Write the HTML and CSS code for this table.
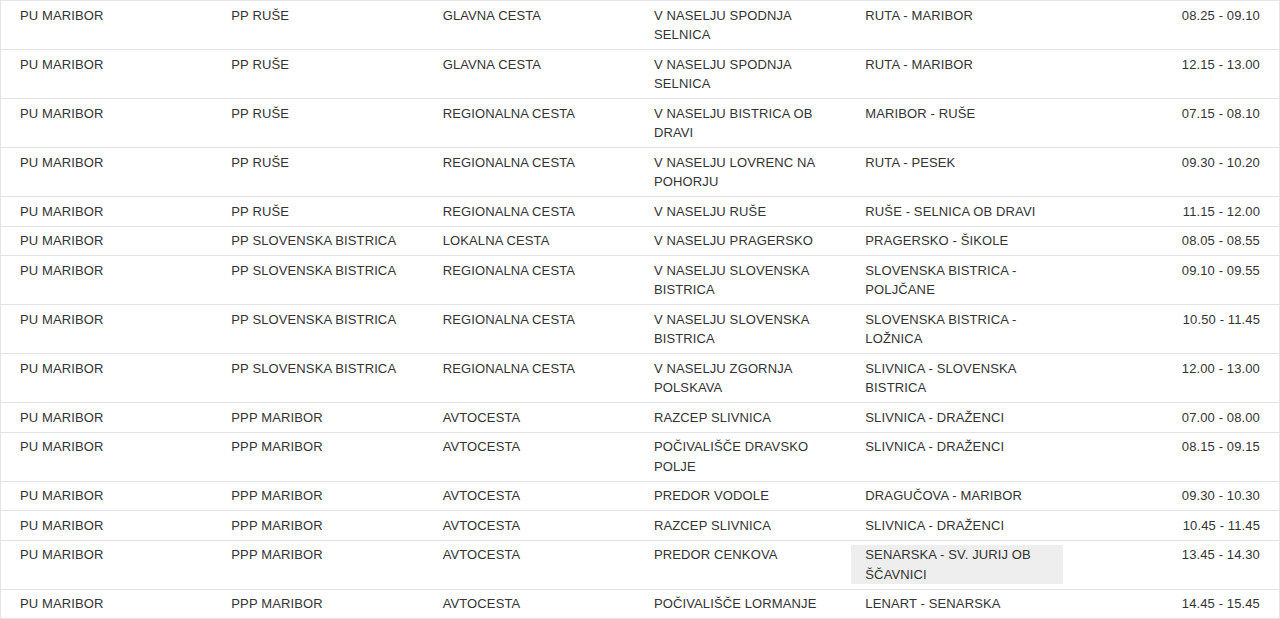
FILE: index.html
```html
<!DOCTYPE html>
<html lang="sl">
<head>
<meta charset="utf-8">
<title>Radarske kontrole</title>
<link rel="stylesheet" href="styles.css">
</head>
<body>
<div class="table">
  <div class="row"><div class="cell">PU MARIBOR</div><div class="cell">PP RUŠE</div><div class="cell">GLAVNA CESTA</div><div class="cell">V NASELJU SPODNJA SELNICA</div><div class="cell">RUTA - MARIBOR</div><div class="cell time">08.25 - 09.10</div></div>
  <div class="row"><div class="cell">PU MARIBOR</div><div class="cell">PP RUŠE</div><div class="cell">GLAVNA CESTA</div><div class="cell">V NASELJU SPODNJA SELNICA</div><div class="cell">RUTA - MARIBOR</div><div class="cell time">12.15 - 13.00</div></div>
  <div class="row"><div class="cell">PU MARIBOR</div><div class="cell">PP RUŠE</div><div class="cell">REGIONALNA CESTA</div><div class="cell">V NASELJU BISTRICA OB DRAVI</div><div class="cell">MARIBOR - RUŠE</div><div class="cell time">07.15 - 08.10</div></div>
  <div class="row"><div class="cell">PU MARIBOR</div><div class="cell">PP RUŠE</div><div class="cell">REGIONALNA CESTA</div><div class="cell">V NASELJU LOVRENC NA POHORJU</div><div class="cell">RUTA - PESEK</div><div class="cell time">09.30 - 10.20</div></div>
  <div class="row"><div class="cell">PU MARIBOR</div><div class="cell">PP RUŠE</div><div class="cell">REGIONALNA CESTA</div><div class="cell">V NASELJU RUŠE</div><div class="cell">RUŠE - SELNICA OB DRAVI</div><div class="cell time">11.15 - 12.00</div></div>
  <div class="row"><div class="cell">PU MARIBOR</div><div class="cell">PP SLOVENSKA BISTRICA</div><div class="cell">LOKALNA CESTA</div><div class="cell">V NASELJU PRAGERSKO</div><div class="cell">PRAGERSKO - ŠIKOLE</div><div class="cell time">08.05 - 08.55</div></div>
  <div class="row"><div class="cell">PU MARIBOR</div><div class="cell">PP SLOVENSKA BISTRICA</div><div class="cell">REGIONALNA CESTA</div><div class="cell">V NASELJU SLOVENSKA BISTRICA</div><div class="cell">SLOVENSKA BISTRICA - POLJČANE</div><div class="cell time">09.10 - 09.55</div></div>
  <div class="row"><div class="cell">PU MARIBOR</div><div class="cell">PP SLOVENSKA BISTRICA</div><div class="cell">REGIONALNA CESTA</div><div class="cell">V NASELJU SLOVENSKA BISTRICA</div><div class="cell">SLOVENSKA BISTRICA - LOŽNICA</div><div class="cell time">10.50 - 11.45</div></div>
  <div class="row"><div class="cell">PU MARIBOR</div><div class="cell">PP SLOVENSKA BISTRICA</div><div class="cell">REGIONALNA CESTA</div><div class="cell">V NASELJU ZGORNJA POLSKAVA</div><div class="cell">SLIVNICA - SLOVENSKA BISTRICA</div><div class="cell time">12.00 - 13.00</div></div>
  <div class="row"><div class="cell">PU MARIBOR</div><div class="cell">PPP MARIBOR</div><div class="cell">AVTOCESTA</div><div class="cell">RAZCEP SLIVNICA</div><div class="cell">SLIVNICA - DRAŽENCI</div><div class="cell time">07.00 - 08.00</div></div>
  <div class="row"><div class="cell">PU MARIBOR</div><div class="cell">PPP MARIBOR</div><div class="cell">AVTOCESTA</div><div class="cell">POČIVALIŠČE DRAVSKO POLJE</div><div class="cell">SLIVNICA - DRAŽENCI</div><div class="cell time">08.15 - 09.15</div></div>
  <div class="row"><div class="cell">PU MARIBOR</div><div class="cell">PPP MARIBOR</div><div class="cell">AVTOCESTA</div><div class="cell">PREDOR VODOLE</div><div class="cell">DRAGUČOVA - MARIBOR</div><div class="cell time">09.30 - 10.30</div></div>
  <div class="row"><div class="cell">PU MARIBOR</div><div class="cell">PPP MARIBOR</div><div class="cell">AVTOCESTA</div><div class="cell">RAZCEP SLIVNICA</div><div class="cell">SLIVNICA - DRAŽENCI</div><div class="cell time">10.45 - 11.45</div></div>
  <div class="row"><div class="cell">PU MARIBOR</div><div class="cell">PPP MARIBOR</div><div class="cell">AVTOCESTA</div><div class="cell">PREDOR CENKOVA</div><div class="cell hover">SENARSKA - SV. JURIJ OB ŠČAVNICI</div><div class="cell time">13.45 - 14.30</div></div>
  <div class="row"><div class="cell">PU MARIBOR</div><div class="cell">PPP MARIBOR</div><div class="cell">AVTOCESTA</div><div class="cell">POČIVALIŠČE LORMANJE</div><div class="cell">LENART - SENARSKA</div><div class="cell time">14.45 - 15.45</div></div>
</div>
</body>
</html>
```
FILE: styles.css
```css
html, body {
  margin: 0;
  padding: 0;
  background: #fff;
}
body {
  font-family: "Liberation Sans", Arial, Helvetica, sans-serif;
  font-size: 13px;
  line-height: 19.5px;
  letter-spacing: 0.12px;
  color: #333;
}
.table {
  border-left: 1px solid #e3e3e3;
  border-right: 1px solid #e3e3e3;
  border-top: 1px solid #e6e6e6;
}
.row {
  display: grid;
  grid-template-columns: repeat(6, 1fr);
  padding: 4.5px 5px;
  border-bottom: 1px solid #e3e3e3;
}
.cell {
  padding: 0 14px;
  min-width: 0;
}
.time {
  text-align: right;
}
.hover {
  background: #eeeeee;
}
```
